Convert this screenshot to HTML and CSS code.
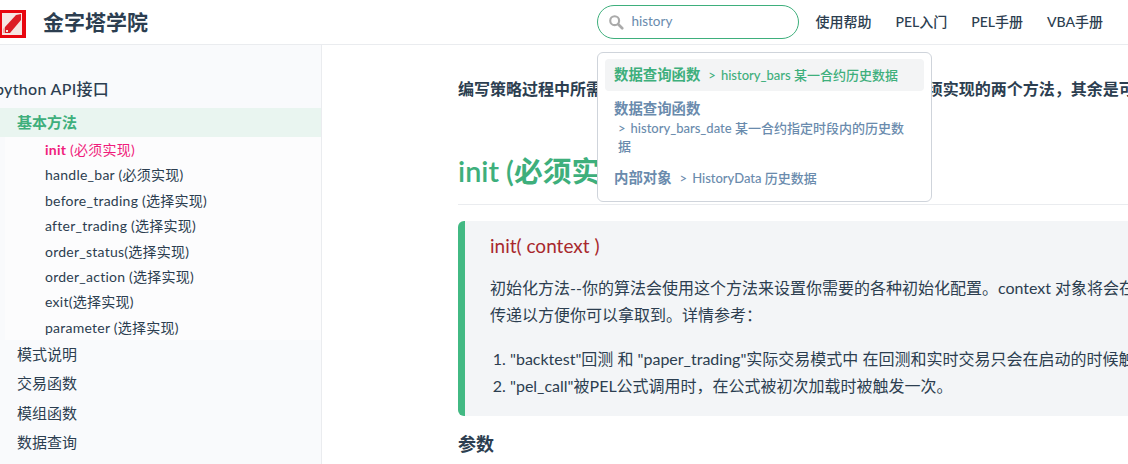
FILE: index.html
```html
<!DOCTYPE html>
<html lang="zh">
<head>
  <meta charset="UTF-8">
  <title>金字塔学院</title>
  <link rel="stylesheet" href="styles.css">
</head>
<body>

  <header class="navbar">
    <a class="logo-link">
      <svg class="logo" width="26" height="34" viewBox="0 0 26 34">
        <rect x="0" y="5" width="26" height="28" fill="#e8060f"/>
        <rect x="2" y="8" width="20" height="22" fill="#f6e6e3"/>
        <path d="M5 22 L16 10 L21 9 L21 15 L10 28 L5 28 Z" fill="#dc1c24"/>
        <path d="M3 24 L5 22 L5 28 L3 28 Z" fill="#eda9a5"/>
        <path d="M6 25 L8 25 L8 27 L6 27 Z" fill="#f6e6e3"/>
      </svg>
      <span class="site-name">金字塔学院</span>
    </a>
    <div class="nav-right">
      <div class="search-box">
        <svg class="search-icon" width="16" height="16" viewBox="0 0 18 18">
          <circle cx="7.5" cy="7.5" r="5" fill="none" stroke="#aaa" stroke-width="2.4"/>
          <path d="M11.5 11.5 L16 16" stroke="#aaa" stroke-width="3" stroke-linecap="round"/>
        </svg>
        <span class="search-text">history</span>
      </div>
      <nav class="nav-links">
        <a>使用帮助</a>
        <a>PEL入门</a>
        <a>PEL手册</a>
        <a>VBA手册</a>
      </nav>
    </div>
  </header>

  <div class="suggestions">
    <div class="suggestion active"><b>数据查询函数</b><span class="sep">&gt;</span>history_bars 某一合约历史数据</div>
    <div class="suggestion"><b class="block">数据查询函数</b><div class="sub"><span class="sep-tight">&gt;</span>history_bars_date 某一合约指定时段内的历史数据</div></div>
    <div class="suggestion"><b>内部对象</b><span class="sep">&gt;</span>HistoryData 历史数据</div>
  </div>

  <div class="page">
    <aside class="sidebar">
      <div class="group-title">python API接口</div>
      <div class="group-active">基本方法</div>
      <ul class="sub-list">
        <li class="current"><b>init</b> (必须实现)</li>
        <li>handle_bar (必须实现)</li>
        <li>before_trading (选择实现)</li>
        <li>after_trading (选择实现)</li>
        <li>order_status(选择实现)</li>
        <li>order_action (选择实现)</li>
        <li>exit(选择实现)</li>
        <li>parameter (选择实现)</li>
      </ul>
      <div class="side-item">模式说明</div>
      <div class="side-item">交易函数</div>
      <div class="side-item">模组函数</div>
      <div class="side-item">数据查询</div>
    </aside>

    <main class="content">
      <p class="intro">编写策略过程中所需要用到的方法，其中 init 和 handle_bar 都是必须实现的两个方法，其余是可选实现的方法。</p>
      <h2 class="section-title">init (必须实现)</h2>
      <div class="tip">
        <p class="tip-title">init( context )</p>
        <p class="tip-text">初始化方法--你的算法会使用这个方法来设置你需要的各种初始化配置。context 对象将会在你的算法的所有方法之间进行<br>传递以方便你可以拿取到。详情参考：</p>
        <ol>
          <li>"backtest"回测 和 "paper_trading"实际交易模式中 在回测和实时交易只会在启动的时候触发一次。</li>
          <li>"pel_call"被PEL公式调用时，在公式被初次加载时被触发一次。</li>
        </ol>
      </div>
      <h3 class="params">参数</h3>
    </main>
  </div>

</body>
</html>
```

FILE: styles.css
```css
html, body {
  margin: 0;
  height: 464px;
  overflow: hidden;
}
body {
  font-family: Lato, "Noto Sans CJK SC", sans-serif;
  font-size: 15px;
  color: #2c3e50;
  background-color: #fff;
  position: relative;
}
.navbar {
  height: 44px;
  border-bottom: 1px solid #eaecef;
  display: flex;
  justify-content: space-between;
  align-items: center;
}
.logo-link {
  display: flex;
  align-items: center;
}
.logo {
  display: block;
  margin-top: -1px;
}
.site-name {
  margin: -2px 0 0 17px;
  font-size: 21px;
  font-weight: 600;
  color: #2c3e50;
}
.nav-right {
  display: flex;
  align-items: center;
  padding-right: 25px;
}
.search-box {
  width: 200px;
  height: 32px;
  border: 1px solid #3eaf7c;
  border-radius: 17px;
  display: flex;
  align-items: center;
  margin-right: 16px;
}
.search-icon {
  margin-left: 10px;
}
.search-text {
  margin: -2px 0 0 7px;
  color: #6a8bad;
  font-size: 13.5px;
}
.nav-links {
  display: flex;
  gap: 24px;
  margin-top: -3px;
  font-size: 14px;
  font-weight: 500;
}
.suggestions {
  position: absolute;
  left: 597px;
  top: 52px;
  width: 319px;
  padding: 6px 7px;
  border: 1px solid #cfd4db;
  border-radius: 6px;
  background: #fff;
  font-size: 13px;
  font-weight: 500;
  color: #6a8bad;
  z-index: 5;
}
.suggestion {
  padding: 6px 9px;
  line-height: 20px;
  border-radius: 4px;
  margin-bottom: 1px;
}
.suggestion.active {
  background: #f3f4f5;
  color: #3eaf7c;
}
.suggestion b {
  font-size: 14.4px;
  font-weight: 600;
}
.block {
  display: block;
  margin-top: 1px;
}
.sub {
  padding-left: 4px;
  line-height: 18px;
}
.sep {
  margin: 0 5px 0 8px;
}
.sep-tight {
  margin-right: 5px;
}
.page {
  display: flex;
  height: 419px;
}
.sidebar {
  width: 321px;
  flex: none;
  background: #f9fafc;
  border-right: 1px solid #eaecef;
  padding-top: 33px;
}
.group-title {
  margin-left: -5px;
  font-size: 16px;
  font-weight: 500;
  letter-spacing: 0.3px;
  line-height: 22px;
  height: 30px;
}
.group-active {
  height: 29px;
  line-height: 29px;
  padding-left: 17px;
  background: #e9f5f0;
  color: #3eaf7c;
  font-weight: 700;
}
.sub-list {
  list-style: none;
  margin: 0 0 0 5px;
  padding: 0 0 0 40px;
  background: #fcfcfd;
  font-size: 14px;
  letter-spacing: 0.25px;
}
.sub-list li {
  height: 25.4px;
  line-height: 25px;
}
.sub-list .current {
  color: #f01d7c;
}
.side-item {
  padding-left: 17px;
  height: 29.3px;
  line-height: 29px;
}
.content {
  flex: 1;
  min-width: 0;
  padding: 0 0 0 136px;
  white-space: nowrap;
}
.intro {
  margin: 32px 0 0;
  font-size: 16px;
  font-weight: 700;
  line-height: 24px;
}
.section-title {
  margin: 54px 0 0;
  padding-bottom: 17px;
  border-bottom: 1px solid #eaecef;
  font-size: 28.8px;
  font-weight: 600;
  line-height: 32px;
  color: #3eaf7c;
}
.tip {
  margin-top: 16px;
  width: 800px;
  height: 195px;
  padding-left: 25px;
  border-left: 7px solid #42b983;
  border-radius: 6px;
  background: #f3f5f7;
}
.tip-title {
  margin: 0;
  padding-top: 13px;
  font-size: 19px;
  line-height: 24px;
  color: #a8282d;
}
.tip-text {
  margin: 16px 0 0;
  font-size: 16px;
  line-height: 27px;
}
.tip ol {
  margin: 18px 0 0;
  padding-left: 20px;
  font-size: 16px;
  line-height: 26.5px;
}
.params {
  margin: 16px 0 0;
  font-size: 18px;
  font-weight: 700;
  line-height: 24px;
}
```
